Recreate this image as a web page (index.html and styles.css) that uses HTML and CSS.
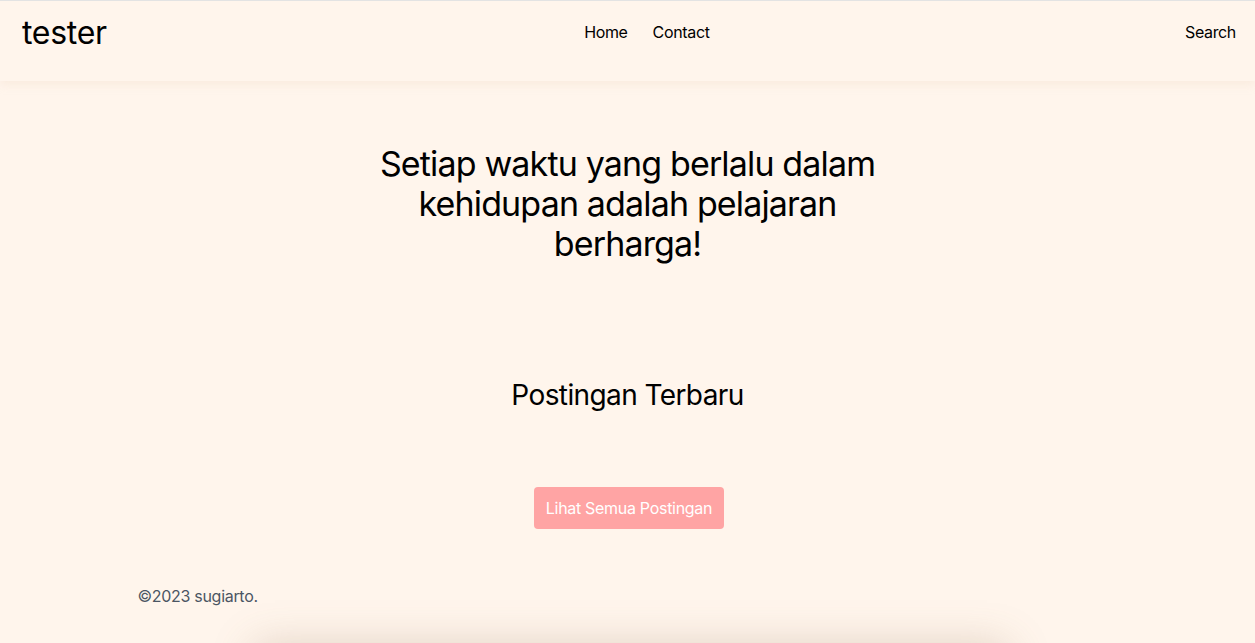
FILE: index.html
```html
<!DOCTYPE html>
<html lang="id">
<head>
<meta charset="utf-8">
<title>tester</title>
<link rel="stylesheet" href="styles.css">
</head>
<body>
<header class="site-header">
  <a class="logo" href="#">tester</a>
  <nav class="nav">
    <a href="#">Home</a>
    <a href="#">Contact</a>
  </nav>
  <a class="search" href="#">Search</a>
</header>
<main class="main">
  <section class="hero">
    <h1>Setiap waktu yang berlalu dalam kehidupan adalah pelajaran berharga!</h1>
  </section>
  <section class="latest">
    <h2>Postingan Terbaru</h2>
    <a class="btn" href="#">Lihat Semua Postingan</a>
  </section>
  <footer class="footer">
    <p>©2023 sugiarto.</p>
  </footer>
  <div class="bottom-card"></div>
</main>
</body>
</html>
```
FILE: styles.css
```css
* { box-sizing: border-box; }
html, body { margin: 0; padding: 0; }
body {
  background: #fff5ec;
  font-family: Inter, "Noto Sans", sans-serif;
  color: #000;
  overflow: hidden;
  height: 643px;
}
a { text-decoration: none; color: inherit; }
.site-header {
  height: 81px;
  border-top: 1px solid #e3e3e3;
  display: flex;
  align-items: center;
  justify-content: space-between;
  padding: 0 19px 0 22px;
  background: #fff5ec;
  box-shadow: 0 4px 8px rgba(240, 220, 200, 0.35);
  position: relative;
  z-index: 2;
}
.logo {
  font-size: 32px;
  font-weight: 400;
  margin-top: -17px;
  letter-spacing: -0.3px;
}
.nav {
  display: flex;
  gap: 25px;
  font-size: 16px;
  letter-spacing: -0.35px;
  margin-top: -18px;
  margin-left: 2px;
}
.search {
  font-size: 16px;
  letter-spacing: -0.35px;
  margin-top: -18px;
}
.main {
  display: flex;
  flex-direction: column;
  align-items: center;
}
.hero {
  width: 520px;
  margin-top: 63px;
  text-align: center;
}
.hero h1 {
  margin: 0;
  font-size: 34px;
  font-weight: 400;
  line-height: 40px;
  letter-spacing: -0.85px;
}
.latest {
  display: flex;
  flex-direction: column;
  align-items: center;
  margin-top: 113px;
}
.latest h2 {
  margin: 0;
  font-size: 28px;
  font-weight: 400;
  line-height: 36px;
  letter-spacing: -0.6px;
}
.btn {
  margin-top: 74px;
  background: #ffa4a4;
  color: #fff;
  font-size: 16px;
  letter-spacing: -0.3px;
  padding: 0 12px;
  height: 42px;
  display: flex;
  align-items: center;
  border-radius: 4px;
  margin-left: 3px;
}
.footer {
  width: 980px;
  margin-top: 55px;
}
.footer p {
  margin: 0;
  font-size: 16px;
  color: #4b5563;
  line-height: 24px;
  letter-spacing: -0.3px;
}
.bottom-card {
  width: 740px;
  height: 200px;
  margin-top: 44px;
  margin-left: 6px;
  background: #fff5ec;
  box-shadow: 0 0 40px 6px rgba(140, 110, 80, 0.28);
}
```
